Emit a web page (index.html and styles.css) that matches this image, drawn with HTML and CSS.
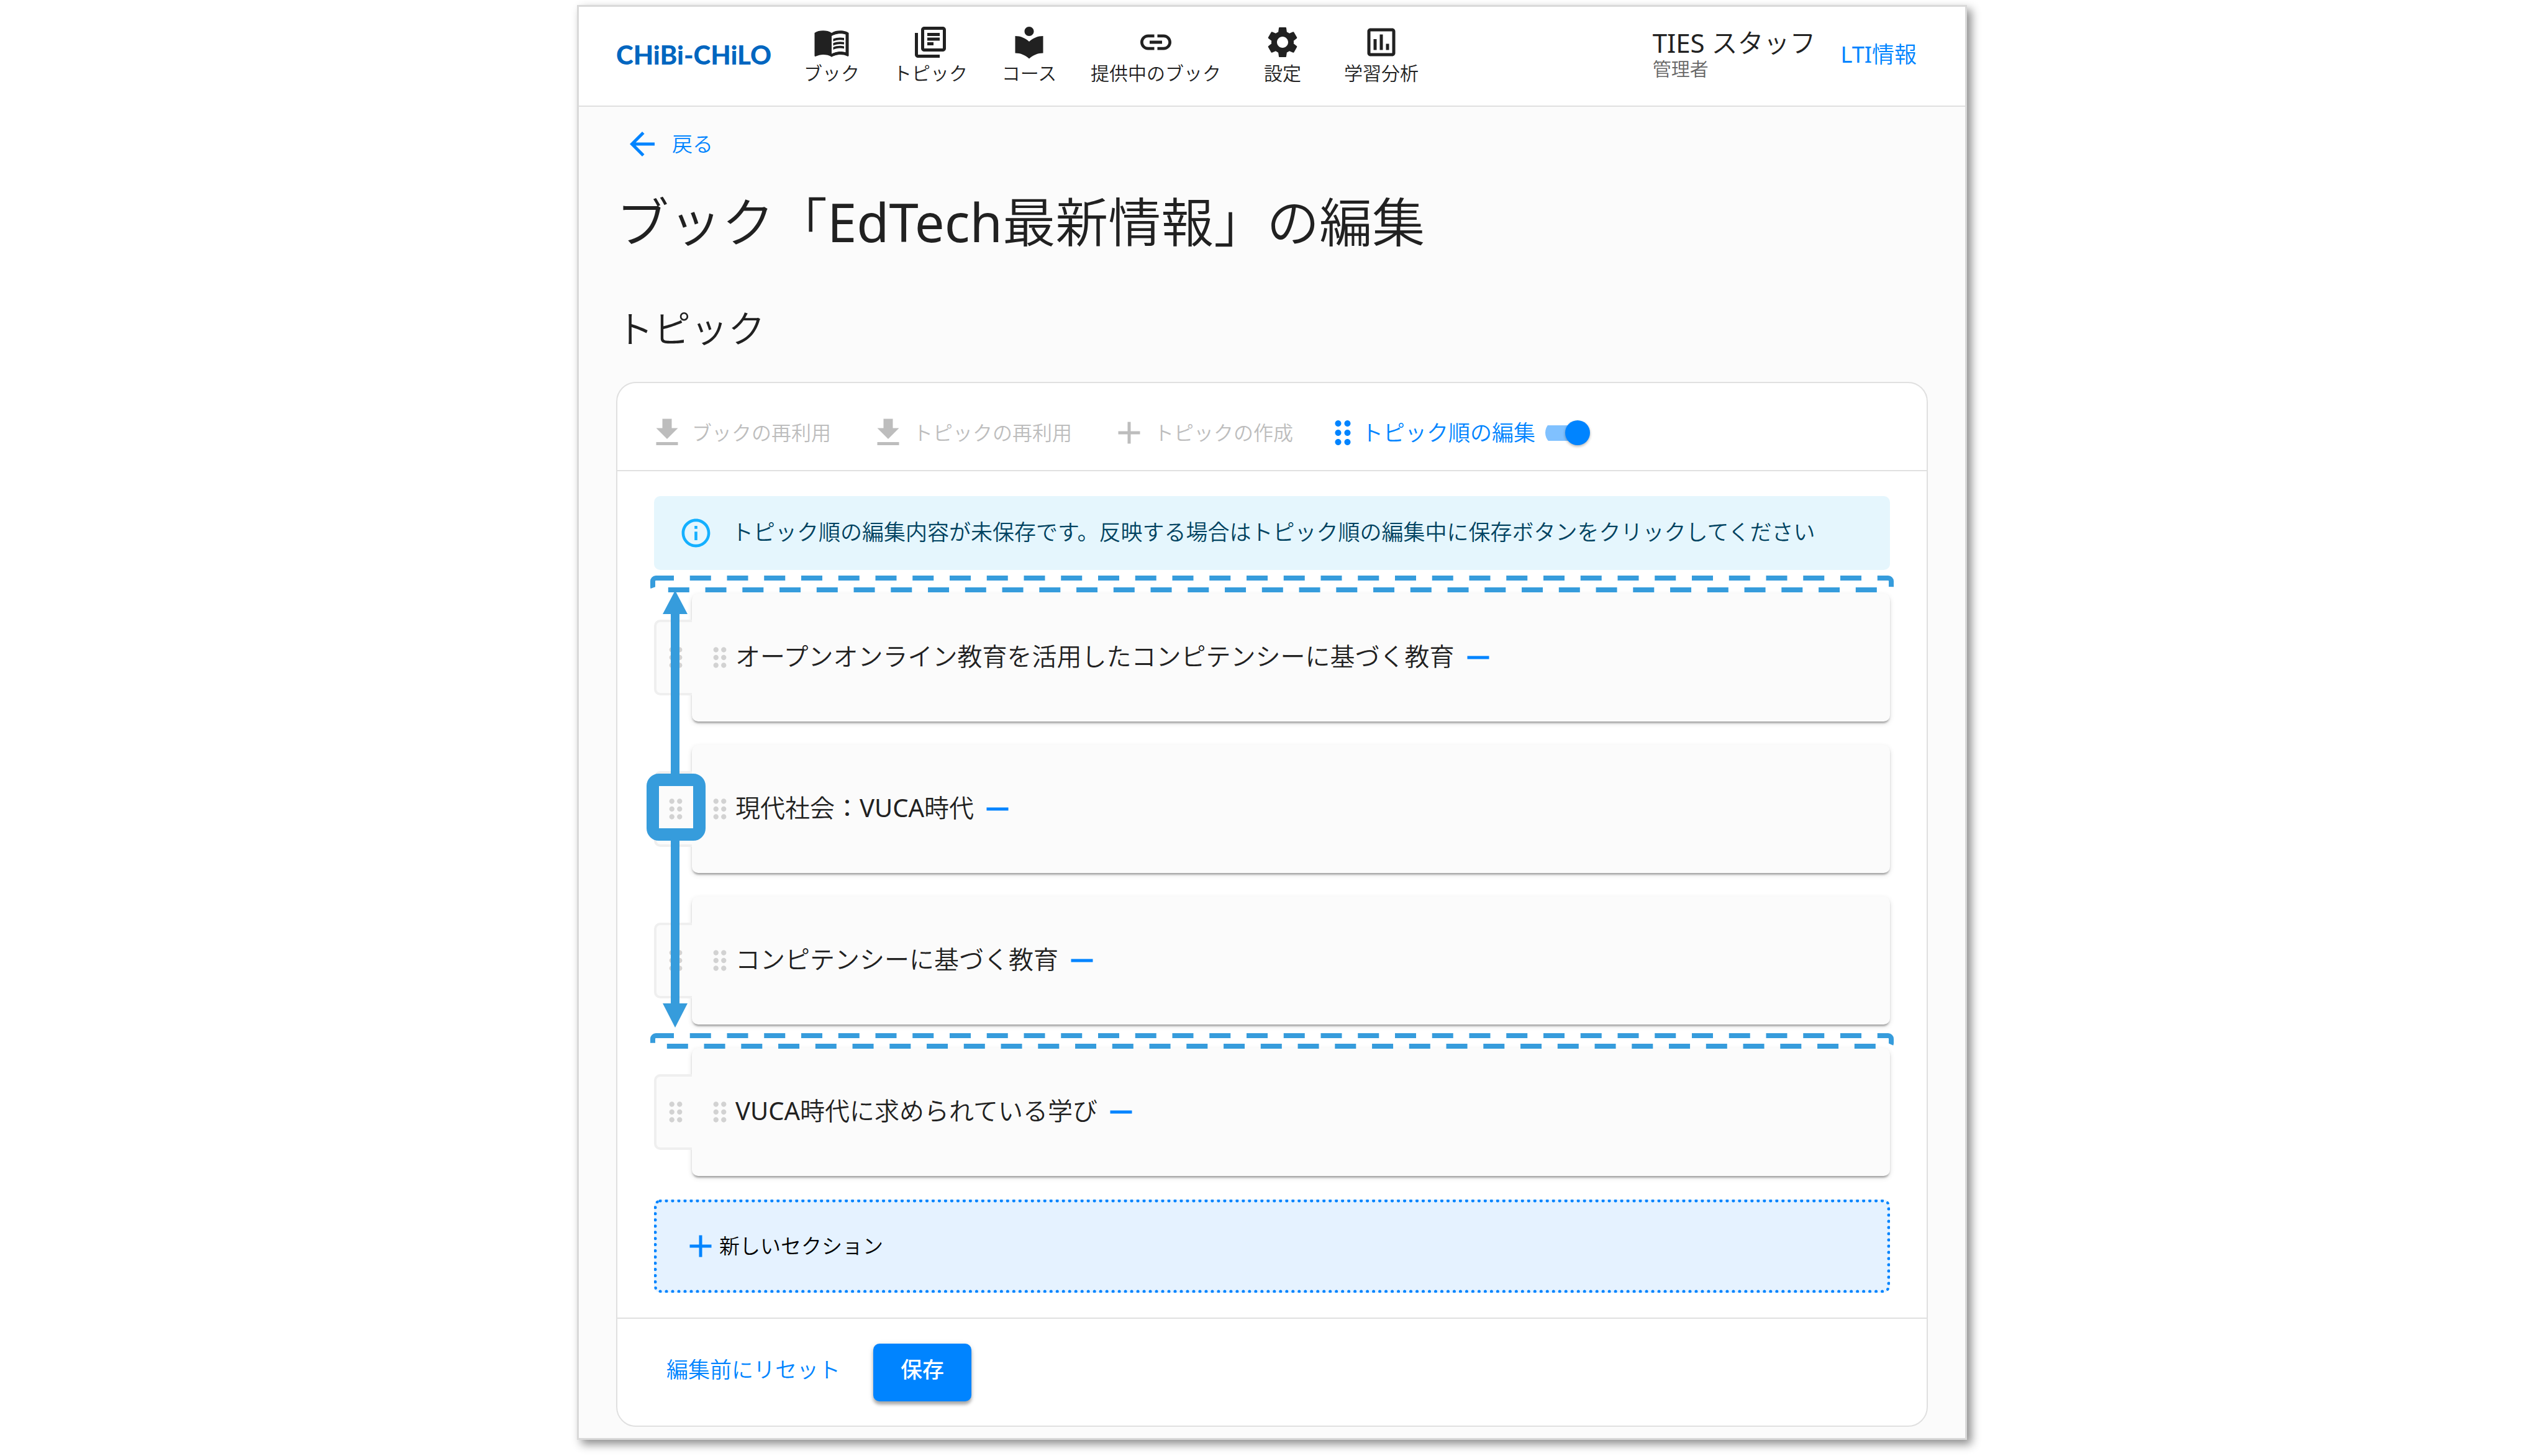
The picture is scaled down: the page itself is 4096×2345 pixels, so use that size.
FILE: index.html
```html
<!DOCTYPE html>
<html lang="ja">
<head>
<meta charset="utf-8">
<title>ブック「EdTech最新情報」の編集</title>
<link rel="stylesheet" href="styles.css">
</head>
<body>
<svg class="sprite" aria-hidden="true">
  <symbol id="drag" viewBox="0 0 24 24"><path d="M11 18c0 1.100-.9 2-2 2s-2-.9-2-2 .9-2 2-2 2 .9 2 2zm-2-8c-1.100 0-2 .9-2 2s.9 2 2 2 2-.9 2-2-.9-2-2-2zm0-6c-1.100 0-2 .9-2 2s.9 2 2 2 2-.9 2-2-.9-2-2-2zm6 4c1.100 0 2-.9 2-2s-.9-2-2-2-2 .9-2 2 .9 2 2 2zm0 2c-1.100 0-2 .9-2 2s.9 2 2 2 2-.9 2-2-.9-2-2-2zm0 6c-1.100 0-2 .9-2 2s.9 2 2 2 2-.9 2-2-.9-2-2-2z"/></symbol>
  <symbol id="add" viewBox="0 0 24 24"><path d="M19 13h-6v6h-2v-6H5v-2h6V5h2v6h6v2z"/></symbol>
  <symbol id="remove" viewBox="0 0 24 24"><path d="M19 13H5v-2h14v2z"/></symbol>
  <symbol id="download" viewBox="0 0 24 24"><path d="M15 9V3H9v6H5l7 7 7-7h-4zM5 18v2h14v-2H5z"/></symbol>
</svg>
<div class="app">
  <header class="header">
    <a class="logo" href="#">CHiBi-CHiLO</a>
    <nav class="nav">
      <a class="nav-item" href="#"><svg class="icon" viewBox="0 0 24 24"><path d="M21 5c-1.110-.35-2.330-.5-3.500-.5-1.950 0-4.050.4-5.500 1.500-1.450-1.100-3.550-1.500-5.500-1.500S2.450 4.900 1 6v14.650c0 .25.25.5.5.5.1 0 .15-.05.25-.05C3.100 20.450 5.050 20 6.500 20c1.950 0 4.050.4 5.500 1.500 1.350-.85 3.800-1.500 5.500-1.500 1.650 0 3.350.3 4.750 1.050.1.050.15.050.25.050.25 0 .5-.25.5-.5V6c-.6-.45-1.250-.75-2-1zm0 13.500c-1.100-.35-2.300-.5-3.500-.5-1.700 0-4.150.65-5.500 1.500V8c1.350-.85 3.800-1.500 5.500-1.500 1.200 0 2.400.15 3.500.5v11.500z"/><path d="M17.500 10.500c.88 0 1.730.09 2.500.26V9.240c-.79-.15-1.640-.24-2.500-.24-1.700 0-3.240.29-4.500.83v1.660c1.130-.64 2.700-.99 4.500-.99zM13 12.490v1.660c1.130-.64 2.700-.99 4.500-.99.88 0 1.730.09 2.500.26V11.900c-.79-.15-1.640-.24-2.500-.24-1.700 0-3.240.3-4.500.83zM17.500 14.330c-1.700 0-3.240.29-4.500.83v1.660c1.130-.64 2.700-.99 4.500-.99.88 0 1.730.09 2.500.26v-1.520c-.79-.16-1.640-.24-2.500-.24z"/></svg><span>ブック</span></a>
      <a class="nav-item" href="#"><svg class="icon" viewBox="0 0 24 24"><path d="M4 6H2v14c0 1.100.9 2 2 2h14v-2H4V6zm16-4H8c-1.100 0-2 .9-2 2v12c0 1.100.9 2 2 2h12c1.100 0 2-.9 2-2V4c0-1.100-.9-2-2-2zm0 14H8V4h12v12zM10 9h8v2h-8zm0 3h4v2h-4zm0-6h8v2h-8z"/></svg><span>トピック</span></a>
      <a class="nav-item" href="#"><svg class="icon" viewBox="0 0 24 24"><path d="M12 11.550C9.640 9.350 6.480 8 3 8v11c3.480 0 6.640 1.350 9 3.550 2.360-2.190 5.520-3.550 9-3.550V8c-3.480 0-6.640 1.350-9 3.550zM12 8c1.660 0 3-1.340 3-3s-1.340-3-3-3-3 1.340-3 3 1.340 3 3 3z"/></svg><span>コース</span></a>
      <a class="nav-item" href="#"><svg class="icon" viewBox="0 0 24 24"><path d="M3.900 12c0-1.710 1.390-3.100 3.100-3.100h4V7H7c-2.760 0-5 2.240-5 5s2.240 5 5 5h4v-1.900H7c-1.710 0-3.100-1.390-3.100-3.100zM8 13h8v-2H8v2zm9-6h-4v1.900h4c1.710 0 3.100 1.390 3.100 3.100s-1.390 3.100-3.100 3.100h-4V17h4c2.760 0 5-2.240 5-5s-2.240-5-5-5z"/></svg><span>提供中のブック</span></a>
      <a class="nav-item" href="#"><svg class="icon" viewBox="0 0 24 24"><path d="M19.140 12.940c.04-.3.06-.61.06-.94 0-.32-.02-.64-.07-.94l2.030-1.580c.18-.14.23-.41.12-.61l-1.920-3.320c-.12-.22-.37-.29-.59-.22l-2.390.96c-.5-.38-1.030-.7-1.620-.94l-.36-2.540c-.04-.24-.24-.41-.48-.41h-3.840c-.24 0-.43.17-.47.41l-.36 2.540c-.59.24-1.130.57-1.620.94l-2.390-.96c-.22-.08-.47 0-.59.22L2.740 8.870c-.12.21-.08.47.12.61l2.030 1.580c-.05.3-.09.63-.09.94s.02.64.07.94l-2.030 1.580c-.18.14-.23.41-.12.61l1.920 3.320c.12.22.37.29.59.22l2.390-.96c.5.38 1.030.7 1.620.94l.36 2.540c.05.24.24.41.48.41h3.840c.24 0 .44-.17.47-.41l.36-2.540c.59-.24 1.130-.56 1.620-.94l2.390.96c.22.08.47 0 .59-.22l1.920-3.320c.12-.22.07-.47-.12-.61l-2.010-1.580zM12 15.600c-1.980 0-3.600-1.620-3.600-3.600s1.620-3.600 3.600-3.600 3.600 1.620 3.600 3.600-1.620 3.600-3.600 3.600z"/></svg><span>設定</span></a>
      <a class="nav-item" href="#"><svg class="icon" viewBox="0 0 24 24"><path d="M9 17H7v-7h2v7zm4 0h-2V7h2v10zm4 0h-2v-4h2v4zm2 2H5V5h14v14zm0-16H5c-1.100 0-2 .9-2 2v14c0 1.100.9 2 2 2h14c1.100 0 2-.9 2-2V5c0-1.100-.9-2-2-2z"/></svg><span>学習分析</span></a>
    </nav>
    <div class="user">
      <div class="user-name"><span class="latin">TIES</span> スタッフ</div>
      <div class="user-role">管理者</div>
    </div>
    <a class="lti" href="#"><span class="latin">LTI</span>情報</a>
  </header>
  <main class="main">
    <a class="back" href="#"><svg class="icon" viewBox="0 0 24 24"><path d="M20 11H7.830l5.590-5.590L12 4l-8 8 8 8 1.410-1.410L7.830 13H20v-2z"/></svg>戻る</a>
    <h1 class="title">ブック「<span class="latin">EdTech</span>最新情報」の編集</h1>
    <h2 class="subtitle">トピック</h2>
    <form class="card">
      <div class="toolbar">
        <button class="tool" type="button" disabled><svg class="icon"><use href="#download"/></svg>ブックの再利用</button>
        <button class="tool" type="button" disabled><svg class="icon"><use href="#download"/></svg>トピックの再利用</button>
        <button class="tool" type="button" disabled><svg class="icon"><use href="#add"/></svg>トピックの作成</button>
        <label class="sort"><svg class="icon"><use href="#drag"/></svg>トピック順の編集<input class="switch" type="checkbox" checked></label>
      </div>
      <div class="content">
        <div class="alert" role="status">
          <svg class="alert-icon" viewBox="0 0 24 24"><path d="M11 7h2v2h-2zm0 4h2v6h-2zm1-9C6.480 2 2 6.480 2 12s4.480 10 10 10 10-4.480 10-10S17.520 2 12 2zm0 18c-4.410 0-8-3.590-8-8s3.590-8 8-8 8 3.590 8 8-3.590 8-8 8z"/></svg>
          <p>トピック順の編集内容が未保存です。反映する場合はトピック順の編集中に保存ボタンをクリックしてください</p>
        </div>
        <div class="board">
          <ul class="sections">
            <li class="section"><span class="handle"><svg class="grip"><use href="#drag"/></svg></span><div class="topic"><svg class="grip"><use href="#drag"/></svg><span class="topic-name">オープンオンライン教育を活用したコンピテンシーに基づく教育</span><button class="remove" type="button" aria-label="削除"><svg class="icon"><use href="#remove"/></svg></button></div></li>
            <li class="section"><span class="handle"><svg class="grip"><use href="#drag"/></svg></span><div class="topic"><svg class="grip"><use href="#drag"/></svg><span class="topic-name">現代社会：<span class="latin">VUCA</span>時代</span><button class="remove" type="button" aria-label="削除"><svg class="icon"><use href="#remove"/></svg></button></div></li>
            <li class="section"><span class="handle"><svg class="grip"><use href="#drag"/></svg></span><div class="topic"><svg class="grip"><use href="#drag"/></svg><span class="topic-name">コンピテンシーに基づく教育</span><button class="remove" type="button" aria-label="削除"><svg class="icon"><use href="#remove"/></svg></button></div></li>
            <li class="section"><span class="handle"><svg class="grip"><use href="#drag"/></svg></span><div class="topic"><svg class="grip"><use href="#drag"/></svg><span class="topic-name"><span class="latin">VUCA</span>時代に求められている学び</span><button class="remove" type="button" aria-label="削除"><svg class="icon"><use href="#remove"/></svg></button></div></li>
          </ul>
          <!-- Guide marks that show how far a section can be dragged -->
          <svg class="range range-top"><rect x="4" y="4" rx="5"/></svg>
          <svg class="range range-bottom"><rect x="4" y="4" rx="5"/></svg>
          <svg class="arrow arrow-up" viewBox="0 0 40 297"><path d="M20 0l20 38H27v259H13V38H0z"/></svg>
          <svg class="arrow arrow-down" viewBox="0 0 40 303"><path d="M20 303l20-39H27V0H13v264H0z"/></svg>
          <div class="focus"></div>
        </div>
        <button class="new-section" type="button"><svg class="icon"><use href="#add"/></svg>新しいセクション</button>
      </div>
      <div class="actions">
        <button class="reset" type="reset">編集前にリセット</button>
        <button class="save" type="submit">保存</button>
      </div>
    </form>
  </main>
</div>
</body>
</html>
```
FILE: styles.css
```css
:root {
  --blue: #0084ff;
  --mark: #369cdc;
  --line: #e0e0e0;
  --paper: #fbfbfb;
}

* { box-sizing: border-box; }

body {
  margin: 0;
  padding: 8px 0 27px;
  background: #fff;
  color: #212121;
  font-family: "Noto Sans", "Noto Sans CJK JP", sans-serif;
  font-size: 35px;
  font-weight: 350;
}

button {
  border: 0;
  padding: 0;
  background: none;
  font-family: inherit;
  font-weight: inherit;
}

a { text-decoration: none; }

svg { fill: currentColor; flex: none; }

.latin { font-weight: 400; }

.sprite { position: absolute; width: 0; height: 0; }

.icon { display: block; width: 60px; height: 60px; }

.grip { display: block; width: 50px; height: 50px; color: #d2d2d2; }

.app {
  max-width: 2238px;
  margin: 0 auto;
  border: 3px solid #d9d9d9;
  background: var(--paper);
  box-shadow: 7px 7px 14px rgba(0, 0, 0, 0.45);
}

/* Header */
.header {
  display: flex;
  align-items: center;
  padding: 27px 60px 32px;
  border-bottom: 2px solid var(--line);
  background: #fff;
}

.logo {
  width: 302px;
  color: #0066c0;
  font-family: Lato, sans-serif;
  font-size: 42px;
  font-weight: 900;
  line-height: 60px;
}

.nav { display: flex; gap: 54px; margin-right: auto; }

.nav-item {
  display: flex;
  flex-direction: column;
  align-items: center;
  min-width: 90px;
  color: #212121;
  font-size: 30px;
  line-height: 40px;
}

.user-name { font-size: 42px; line-height: 46px; }

.user-role { color: #666; font-size: 30px; line-height: 38px; }

.lti { padding: 0 18px 0 40px; color: var(--blue); font-size: 36px; line-height: 48px; }

/* Page body */
.main { padding: 30px 60px 18px; }

.back {
  display: flex;
  align-items: center;
  gap: 18px;
  width: fit-content;
  padding: 0 12px;
  color: var(--blue);
  font-size: 33px;
  line-height: 60px;
}

.title {
  margin: 35px 0 0;
  font-size: 85px;
  font-weight: 350;
  line-height: 120px;
}

.subtitle {
  margin: 72px 0 46px;
  font-size: 60px;
  font-weight: 350;
  line-height: 80px;
}

.card {
  border: 2px solid var(--line);
  border-radius: 32px;
  background: #fff;
}

.toolbar {
  display: flex;
  align-items: center;
  gap: 62px;
  padding: 50px 50px 30px;
  border-bottom: 2px solid var(--line);
}

.tool {
  display: flex;
  align-items: center;
  gap: 10px;
  color: #bdbdbd;
  font-size: 32px;
  line-height: 60px;
}

.sort {
  display: flex;
  align-items: center;
  margin-left: -12px;
  color: var(--blue);
  line-height: 60px;
}

.switch {
  display: flex;
  align-items: center;
  justify-content: flex-end;
  width: 72px;
  height: 40px;
  margin: 0 0 0 16px;
  appearance: none;
  background: linear-gradient(#80c1ff, #80c1ff) 0 center / 62px 25px no-repeat;
  border-radius: 20px;
}

.switch::before {
  content: "";
  width: 40px;
  height: 40px;
  border-radius: 50%;
  background: var(--blue);
  box-shadow: 0 2px 4px rgba(0, 0, 0, 0.3);
}

.content { padding: 40px 59px; }

.alert {
  display: flex;
  align-items: center;
  gap: 30px;
  padding: 32px 40px;
  border-radius: 10px;
  background: #e5f6fd;
  color: #014361;
}

.alert p { margin: 0; padding-bottom: 4px; line-height: 51px; }

.alert-icon { width: 55px; height: 55px; color: #14b0ff; }

/* Sections */
.board { position: relative; margin: 38px 0; }

.sections {
  display: flex;
  flex-direction: column;
  gap: 38px;
  margin: 0;
  padding: 0;
  list-style: none;
}

.section { display: flex; align-items: center; }

.handle {
  position: relative;
  display: flex;
  align-items: center;
  justify-content: center;
  width: 61px;
  height: 122px;
  padding-left: 5px;
  border: 4px solid #efefef;
  border-right: 0;
  border-radius: 10px 0 0 10px;
  background: var(--paper);
}

.topic {
  display: flex;
  flex: 1;
  align-items: center;
  padding: 73px 20px;
  border-radius: 10px;
  background: var(--paper);
  box-shadow: 0 5px 3px -3px rgba(0, 0, 0, 0.2), 0 3px 3px rgba(0, 0, 0, 0.14), 0 3px 8px rgba(0, 0, 0, 0.12);
}

.topic-name { padding-bottom: 4px; font-size: 40px; line-height: 56px; }

.remove { margin-left: 8px; color: var(--blue); }

.range {
  position: absolute;
  left: -6px;
  width: calc(100% + 12px);
}

.range rect {
  width: calc(100% - 8px);
  height: calc(100% - 8px);
  fill: none;
  stroke: var(--mark);
  stroke-width: 8;
  stroke-dasharray: 34 25.75;
  stroke-dashoffset: 5;
}

.range-top { top: -29px; height: 27px; }

.range-bottom { top: 708px; height: 25px; }

.arrow { position: absolute; left: 14px; width: 40px; color: var(--mark); }

.arrow-up { top: -5px; height: 297px; }

.arrow-down { top: 396px; height: 303px; }

.focus {
  position: absolute;
  top: 290px;
  left: -12px;
  width: 95px;
  height: 108px;
  border: 20px solid var(--mark);
  border-radius: 20px;
}

.new-section {
  display: flex;
  align-items: center;
  width: 100%;
  padding: 40px;
  border: 5px dotted var(--blue);
  border-radius: 10px;
  background: #e5f2ff;
  color: #000;
  font-size: 33px;
  line-height: 60px;
}

.new-section .icon { color: var(--blue); }

.actions {
  display: flex;
  align-items: center;
  gap: 38px;
  padding: 40px 64px 39px;
  border-top: 2px solid var(--line);
}

.reset {
  padding: 0 15px 9px;
  color: var(--blue);
  font-size: 35px;
  line-height: 60px;
}

.save {
  padding: 12px 44px 21px;
  border-radius: 10px;
  background: var(--blue);
  box-shadow: 0 5px 5px rgba(0, 0, 0, 0.28), 0 2px 10px rgba(0, 0, 0, 0.14);
  color: #fff;
  font-size: 35px;
  font-weight: 500;
  line-height: 60px;
}
```
